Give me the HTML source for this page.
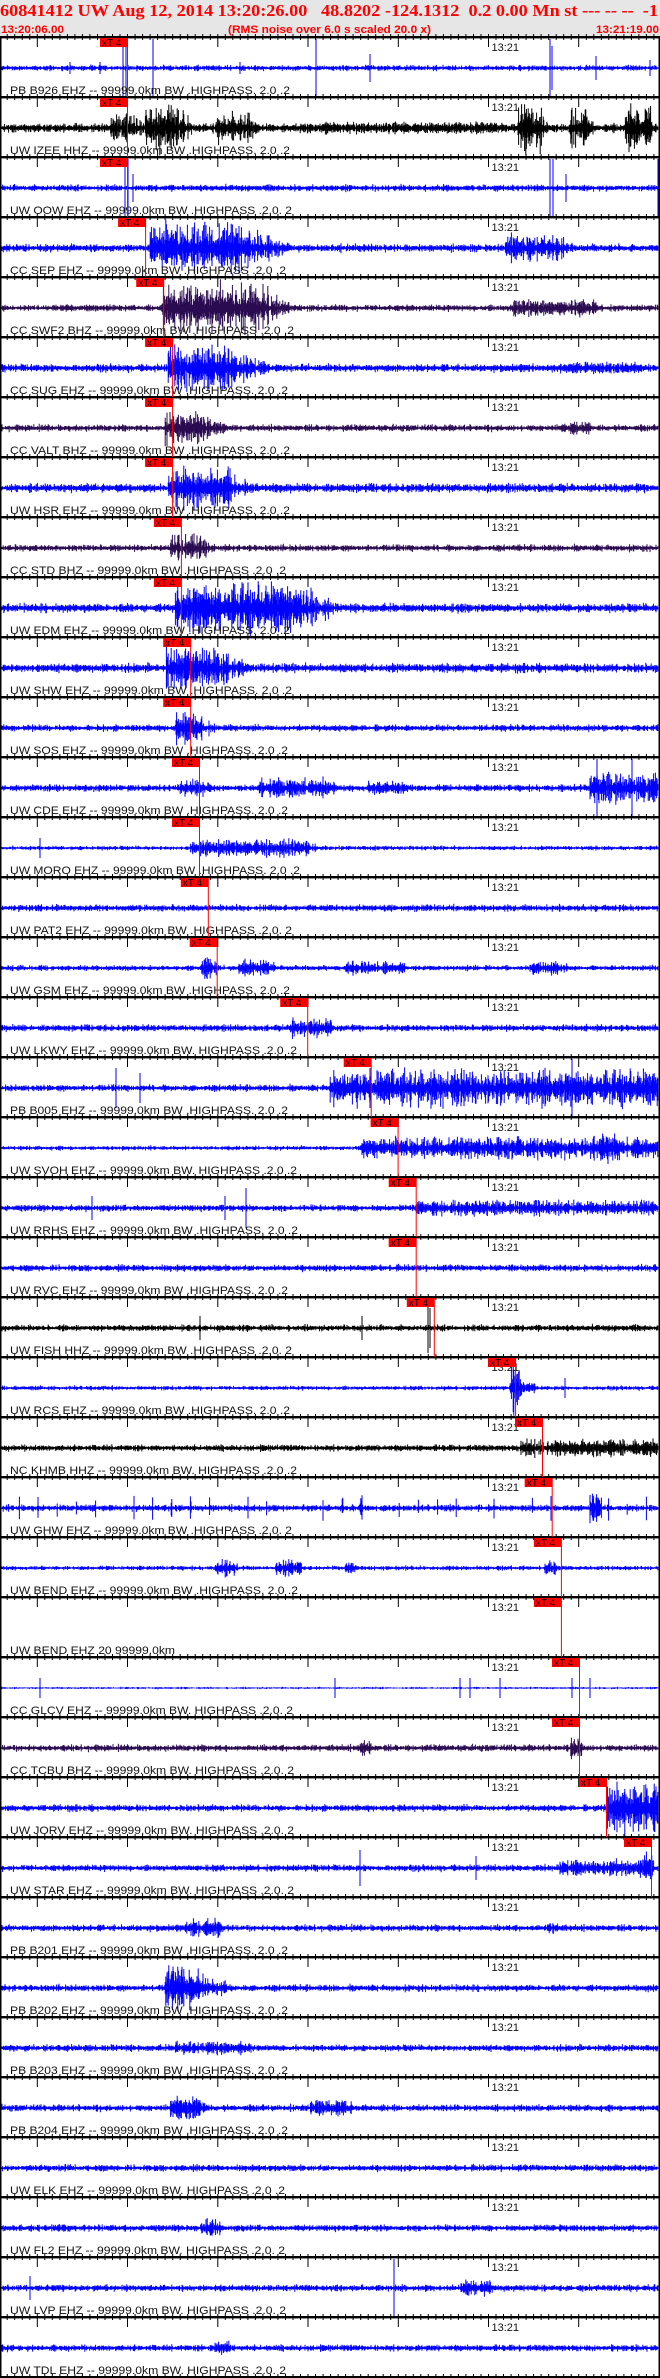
<!DOCTYPE html>
<html><head><meta charset="utf-8">
<style>
html,body{margin:0;padding:0;background:#fff;}
svg{display:block;}
</style></head>
<body>
<svg id="s" xmlns="http://www.w3.org/2000/svg" width="660" height="2378" viewBox="0 0 660 2378">
<rect x="0" y="0" width="660" height="37" fill="#e6e6e6"/>
<text x="0" y="16" font-family="Liberation Serif, serif" font-weight="bold" font-size="17" fill="#ff0000" textLength="658" lengthAdjust="spacingAndGlyphs" xml:space="preserve">60841412 UW Aug 12, 2014 13:20:26.00   48.8202 -124.1312  0.2 0.00 Mn st --- -- --  -1</text>
<text x="1" y="33" font-family="Liberation Sans, sans-serif" font-weight="bold" font-size="11" fill="#ff0000" textLength="63" lengthAdjust="spacingAndGlyphs">13:20:06.00</text>
<text x="228" y="33" font-family="Liberation Sans, sans-serif" font-weight="bold" font-size="11" fill="#ff0000" textLength="203" lengthAdjust="spacingAndGlyphs">(RMS noise over 6.0 s scaled 20.0 x)</text>
<text x="596" y="33" font-family="Liberation Sans, sans-serif" font-weight="bold" font-size="11" fill="#ff0000" textLength="63" lengthAdjust="spacingAndGlyphs">13:21:19.00</text>
<g id="w"></g>
<g id="lab" font-family="Liberation Sans, sans-serif" font-size="11" fill="#111">
<text x="10" y="94" textLength="280" lengthAdjust="spacingAndGlyphs">PB B926 EHZ -- 99999.0km BW .HIGHPASS. 2.0 .2</text>
<text x="10" y="154" textLength="280" lengthAdjust="spacingAndGlyphs">UW IZEE HHZ -- 99999.0km BW .HIGHPASS. 2.0 .2</text>
<text x="10" y="214" textLength="282" lengthAdjust="spacingAndGlyphs">UW OOW EHZ -- 99999.0km BW .HIGHPASS .2.0. 2</text>
<text x="10" y="274" textLength="276" lengthAdjust="spacingAndGlyphs">CC SEP EHZ -- 99999.0km BW .HIGHPASS .2.0 .2</text>
<text x="10" y="334" textLength="284" lengthAdjust="spacingAndGlyphs">CC SWF2 BHZ -- 99999.0km BW .HIGHPASS .2.0 .2</text>
<text x="10" y="394" textLength="278" lengthAdjust="spacingAndGlyphs">CC SUG EHZ -- 99999.0km BW .HIGHPASS. 2.0 .2</text>
<text x="10" y="454" textLength="280" lengthAdjust="spacingAndGlyphs">CC VALT BHZ -- 99999.0km BW .HIGHPASS. 2.0 .2</text>
<text x="10" y="514" textLength="280" lengthAdjust="spacingAndGlyphs">UW HSR EHZ -- 99999.0km BW .HIGHPASS. 2.0 .2</text>
<text x="10" y="574" textLength="276" lengthAdjust="spacingAndGlyphs">CC STD BHZ -- 99999.0km BW .HIGHPASS .2.0 .2</text>
<text x="10" y="634" textLength="280" lengthAdjust="spacingAndGlyphs">UW EDM EHZ -- 99999.0km BW .HIGHPASS. 2.0 .2</text>
<text x="10" y="694" textLength="282" lengthAdjust="spacingAndGlyphs">UW SHW EHZ -- 99999.0km BW .HIGHPASS. 2.0 .2</text>
<text x="10" y="754" textLength="278" lengthAdjust="spacingAndGlyphs">UW SOS EHZ -- 99999.0km BW .HIGHPASS. 2.0 .2</text>
<text x="10" y="814" textLength="278" lengthAdjust="spacingAndGlyphs">UW CDE EHZ -- 99999.0km BW .HIGHPASS. 2.0 .2</text>
<text x="10" y="874" textLength="290" lengthAdjust="spacingAndGlyphs">UW MORO EHZ -- 99999.0km BW .HIGHPASS. 2.0 .2</text>
<text x="10" y="934" textLength="282" lengthAdjust="spacingAndGlyphs">UW PAT2 EHZ -- 99999.0km BW .HIGHPASS .2.0. 2</text>
<text x="10" y="994" textLength="280" lengthAdjust="spacingAndGlyphs">UW GSM EHZ -- 99999.0km BW .HIGHPASS. 2.0 .2</text>
<text x="10" y="1054" textLength="287" lengthAdjust="spacingAndGlyphs">UW LKWY EHZ -- 99999.0km BW. HIGHPASS .2.0 .2</text>
<text x="10" y="1114" textLength="278" lengthAdjust="spacingAndGlyphs">PB B005 EHZ -- 99999.0km BW .HIGHPASS. 2.0 .2</text>
<text x="10" y="1174" textLength="287" lengthAdjust="spacingAndGlyphs">UW SVOH EHZ -- 99999.0km BW. HIGHPASS .2.0 .2</text>
<text x="10" y="1234" textLength="288" lengthAdjust="spacingAndGlyphs">UW RRHS EHZ -- 99999.0km BW .HIGHPASS. 2.0 .2</text>
<text x="10" y="1294" textLength="278" lengthAdjust="spacingAndGlyphs">UW RVC EHZ -- 99999.0km BW .HIGHPASS. 2.0 .2</text>
<text x="10" y="1354" textLength="282" lengthAdjust="spacingAndGlyphs">UW FISH HHZ -- 99999.0km BW .HIGHPASS .2.0. 2</text>
<text x="10" y="1414" textLength="280" lengthAdjust="spacingAndGlyphs">UW RCS EHZ -- 99999.0km BW .HIGHPASS. 2.0 .2</text>
<text x="10" y="1474" textLength="287" lengthAdjust="spacingAndGlyphs">NC KHMB HHZ -- 99999.0km BW. HIGHPASS .2.0 .2</text>
<text x="10" y="1534" textLength="282" lengthAdjust="spacingAndGlyphs">UW GHW EHZ -- 99999.0km BW .HIGHPASS .2.0. 2</text>
<text x="10" y="1594" textLength="288" lengthAdjust="spacingAndGlyphs">UW BEND EHZ -- 99999.0km BW .HIGHPASS. 2.0 .2</text>
<text x="10" y="1654" textLength="165" lengthAdjust="spacingAndGlyphs">UW BEND EHZ 20 99999.0km</text>
<text x="10" y="1714" textLength="283" lengthAdjust="spacingAndGlyphs">CC GLCV EHZ -- 99999.0km BW. HIGHPASS .2.0. 2</text>
<text x="10" y="1774" textLength="284" lengthAdjust="spacingAndGlyphs">CC TCBU BHZ -- 99999.0km BW. HIGHPASS .2.0. 2</text>
<text x="10" y="1834" textLength="284" lengthAdjust="spacingAndGlyphs">UW JORV EHZ -- 99999.0km BW. HIGHPASS .2.0. 2</text>
<text x="10" y="1894" textLength="284" lengthAdjust="spacingAndGlyphs">UW STAR EHZ -- 99999.0km BW. HIGHPASS .2.0. 2</text>
<text x="10" y="1954" textLength="278" lengthAdjust="spacingAndGlyphs">PB B201 EHZ -- 99999.0km BW .HIGHPASS. 2.0 .2</text>
<text x="10" y="2014" textLength="278" lengthAdjust="spacingAndGlyphs">PB B202 EHZ -- 99999.0km BW .HIGHPASS. 2.0 .2</text>
<text x="10" y="2074" textLength="278" lengthAdjust="spacingAndGlyphs">PB B203 EHZ -- 99999.0km BW .HIGHPASS. 2.0 .2</text>
<text x="10" y="2134" textLength="278" lengthAdjust="spacingAndGlyphs">PB B204 EHZ -- 99999.0km BW .HIGHPASS. 2.0 .2</text>
<text x="10" y="2194" textLength="275" lengthAdjust="spacingAndGlyphs">UW ELK EHZ -- 99999.0km BW. HIGHPASS .2.0 .2</text>
<text x="10" y="2254" textLength="275" lengthAdjust="spacingAndGlyphs">UW FL2 EHZ -- 99999.0km BW. HIGHPASS .2.0. 2</text>
<text x="10" y="2314" textLength="276" lengthAdjust="spacingAndGlyphs">UW LVP EHZ -- 99999.0km BW. HIGHPASS .2.0. 2</text>
<text x="10" y="2374" textLength="276" lengthAdjust="spacingAndGlyphs">UW TDL EHZ -- 99999.0km BW. HIGHPASS .2.0. 2</text>
</g>
<g id="t" font-family="Liberation Sans, sans-serif" font-size="11" fill="#111"></g>
<g id="m"></g>
</svg>
<script>
(function(){
var NS="http://www.w3.org/2000/svg";
var seed=12345;function R(){seed=(seed*1103515245+12345)&0x7fffffff;return seed/0x7fffffff;}
var B="#0000ff",K="#000000",P="#2a0a50";
var D=[
[B,2.5,[],[[123,30],[126,28],[153,30],[316,30],[370,14],[550,30],[552,22],[596,12],[70,6],[100,6],[240,6],[650,8]]],
[K,4,[[110,135,18,20],[145,178,30,20],[215,250,18,15],[300,500,7,0],[518,540,28,10],[570,590,22,5],[625,650,30,5]],[]],
[B,3,[],[[125,30],[128,30],[133,14],[550,30],[553,30],[566,14],[658,30]]],
[B,3.5,[[150,240,30,60],[505,560,16,20]],[]],
[P,3,[[162,260,30,40],[510,595,10,10]],[]],
[B,3.5,[[168,230,28,50],[560,640,7,0]],[]],
[P,3,[[165,205,20,30],[560,590,8,5]],[]],
[B,4,[[168,230,25,30]],[]],
[P,3,[[170,200,16,20]],[]],
[B,4,[[175,300,30,50]],[]],
[B,4,[[166,220,25,40]],[]],
[B,3,[[175,200,18,20]],[]],
[B,3,[[180,205,12,10],[258,330,12,10],[368,410,8,5],[590,660,18,0]],[[597,30],[632,30]]],
[B,2,[[190,310,10,10]],[[40,10]]],
[B,3,[],[]],
[B,2.5,[[200,215,12,5],[238,272,10,5],[345,405,8,5],[530,565,8,5]],[]],
[B,3,[[290,330,12,5]],[]],
[B,3,[[330,660,22,0]],[[116,20],[140,15],[572,30],[370,20]]],
[B,2,[[360,660,13,0],[600,620,18,5]],[]],
[B,3,[[416,660,9,0]],[[92,12],[225,12],[246,20]]],
[B,3,[],[]],
[K,3,[],[[200,12],[362,12],[428,25],[430,20]]],
[B,2,[[510,518,30,6],[520,535,8,5]],[[565,10]]],
[K,3,[[520,660,11,0]],[]],
[B,3,[[590,600,20,5],[360,362,15,2]],[]],
[B,2,[[215,235,10,5],[275,300,10,5],[345,355,8,3],[545,558,8,3]],[]],
null,
[B,1,[],[[40,10],[335,10],[460,10],[470,10],[500,10],[572,10],[590,10]]],
[P,3,[[360,370,10,3],[570,582,12,5]],[]],
[B,3,[[606,660,30,0]],[]],
[B,3,[[560,650,10,0],[640,652,18,3]],[[360,18],[476,12]]],
[B,3,[[185,220,12,5],[548,558,8,3]],[]],
[B,3,[[165,200,25,40]],[]],
[B,3,[[175,250,8,5]],[]],
[B,3,[[170,200,15,10],[310,350,10,5]],[]],
[B,3,[],[]],
[B,3,[[200,220,10,5]],[]],
[B,3,[[460,490,10,5]],[[30,12],[394,30]]],
[B,3,[[210,230,8,5]],[]]
];
var MK=[127.5,127.5,127.5,145.6,163.7,172.6,172.6,172.6,181.4,181.4,190.7,190.7,199.5,199.5,208.3,217.2,307.7,371.2,398.1,416.2,416.2,434.3,515.6,542.5,552.2,561.4,561.4,579.5,579.5,606.5,651.5];
var w=document.getElementById('w'),tg=document.getElementById('t'),mg=document.getElementById('m');
for(var k=0;k<39;k++){
 var top=37+60*k,c=top+31,d=D[k];
 if(d){
  var s="";
  for(var x=2;x<658;x+=0.6){
   var r0=R();
   var a=d[1]*(0.35+0.9*r0*r0+0.25*R());
   var bs=d[2];
   for(var i=0;i<bs.length;i++){var b=bs[i];var e=0;var rr=R();
    if(x>=b[0]&&x<=b[1])e=b[2]*(0.2+0.8*Math.pow(rr,1.3));
    else if(x>b[1]&&b[3]>0&&x<b[1]+b[3])e=b[2]*(1-(x-b[1])/b[3])*(0.15+0.85*rr*rr);
    if(e>a)a=e;}
   if(k==24&&(Math.floor(x)%19==0)&&R()<0.6)a=Math.max(a,9+6*R());
   var y1=c-a*(0.4+0.6*R()),y2=c+a*(0.4+0.6*R());
   y1=Math.max(top+2,y1);y2=Math.min(top+59,y2);
   s+="M"+x.toFixed(1)+" "+y1.toFixed(1)+"V"+y2.toFixed(1);
  }
  var sp=d[3];for(var i=0;i<sp.length;i++){var a=sp[i][1];s+="M"+sp[i][0]+" "+Math.max(top+2,c-a)+"V"+Math.min(top+59,c+a);}
  var p=document.createElementNS(NS,'path');p.setAttribute('d',s);p.setAttribute('stroke',d[0]);p.setAttribute('stroke-width','1');p.setAttribute('fill','none');w.appendChild(p);
 }
 var t=document.createElementNS(NS,'text');t.setAttribute('x','491.5');t.setAttribute('y',top+14);t.textContent='13:21';tg.appendChild(t);
}
var s2="";
for(var k=0;k<=39;k++){
 var y=37+60*k;
 var r=document.createElementNS(NS,'rect');r.setAttribute('x',0);r.setAttribute('y',y-1);r.setAttribute('width',660);r.setAttribute('height',2.4);r.setAttribute('fill','#000');mg.appendChild(r);
 for(var n=-65;n<=23;n++){var x=488.5+n*7.52;if(x<3||x>657)continue;
  var long=(n%12==0);
  s2+="M"+x.toFixed(1)+" "+(y-3)+"V"+(y+(long?10:3));}
}
var tp=document.createElementNS(NS,'path');tp.setAttribute('d',s2);tp.setAttribute('stroke','#000');tp.setAttribute('stroke-width','1');mg.appendChild(tp);
var lb=document.createElementNS(NS,'rect');lb.setAttribute('x',0);lb.setAttribute('y',37);lb.setAttribute('width',1.5);lb.setAttribute('height',2341);lb.setAttribute('fill','#000');mg.appendChild(lb);
var rb=document.createElementNS(NS,'rect');rb.setAttribute('x',658.5);rb.setAttribute('y',37);rb.setAttribute('width',1.5);rb.setAttribute('height',2341);rb.setAttribute('fill','#000');mg.appendChild(rb);
for(var k=0;k<MK.length;k++){
 var top=37+60*k,x=MK[k];
 var l=document.createElementNS(NS,'rect');l.setAttribute('x',x-0.5);l.setAttribute('y',top+1);l.setAttribute('width',1);l.setAttribute('height',59);l.setAttribute('fill','#ff0000');mg.appendChild(l);
 var b=document.createElementNS(NS,'rect');b.setAttribute('x',x-27.5);b.setAttribute('y',top+1);b.setAttribute('width',27.5);b.setAttribute('height',9);b.setAttribute('fill','#ff0000');mg.appendChild(b);
 var t=document.createElementNS(NS,'text');t.setAttribute('x',x-25.5);t.setAttribute('y',top+9);t.setAttribute('font-family','Liberation Sans, sans-serif');t.setAttribute('font-size','10');t.setAttribute('fill','#000');t.textContent='xT 4';mg.appendChild(t);
}
})();
</script>
</body></html>
